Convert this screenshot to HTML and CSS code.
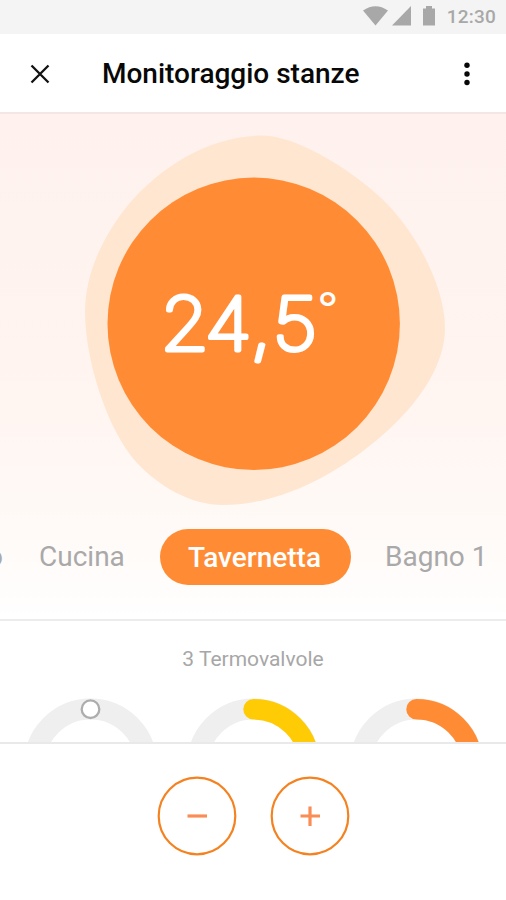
FILE: index.html
```html
<!DOCTYPE html>
<html lang="it">
<head>
<meta charset="utf-8">
<title>Monitoraggio stanze</title>
<link rel="stylesheet" href="styles.css">
</head>
<body>
<div class="screen">
  <div class="status">
    <svg class="status-icons" viewBox="0 0 76 22" width="76" height="22">
      <path d="M0 4.5Q12.500-4 25 4.500L12.500 19.500Z"/>
      <path d="M48 0V19.500H29Z"/>
      <path d="M60 2.500H63V0H69V2.500H72V19.500H60Z"/>
    </svg>
    <span class="clock">12:30</span>
  </div>
  <header class="header">
    <svg class="close" viewBox="0 0 20 20" width="20" height="20"><path d="M1.500 1.500L18.500 18.500M18.500 1.500L1.500 18.500"/></svg>
    <h1 class="title">Monitoraggio stanze</h1>
    <svg class="more" viewBox="0 0 6 24" width="6" height="24"><circle cx="3" cy="3.200" r="2.700"/><circle cx="3" cy="12" r="2.700"/><circle cx="3" cy="20.500" r="2.700"/></svg>
  </header>
  <main class="hero">
    <svg class="dial" viewBox="0 114 506 396" width="506" height="396">
      <path class="halo" d="M262 135.500C294 135.500 345 165 380 197C417 231 445 288 445 328C445 384 386 440 330 473C292 495 255 505 223 505C190 505 159 486 137 463C106 429 85 358 85 312C85 272 104 235 128 205C161 165 212 135.500 262 135.500Z"/>
      <circle class="disc" cx="253.700" cy="323.800" r="146.200"/>
      <text class="temp" y="350" transform="scale(1.08 1)"><tspan x="148.500">2</tspan><tspan x="189.500">4</tspan><tspan x="232">,</tspan><tspan x="252.500">5</tspan><tspan class="degree" x="294.500" y="323.500">°</tspan></text>
    </svg>
    <nav class="rooms">
      <span class="room room-left">Soggiorno</span>
      <span class="room room-kitchen">Cucina</span>
      <span class="room active">Tavernetta</span>
      <span class="room room-bath">Bagno 1</span>
    </nav>
  </main>
  <section class="valves">
    <h2 class="caption">3 Termovalvole</h2>
    <div class="gauges">
      <svg class="gauge" viewBox="0 0 134 45" width="134" height="45"><circle class="track" cx="66.500" cy="67" r="56"/><circle class="knob" cx="66.500" cy="11.200" r="8.800"/></svg>
      <svg class="gauge" viewBox="0 0 134 45" width="134" height="45"><circle class="track" cx="66.500" cy="67" r="56"/><path class="arc yellow" d="M66.500 11.200A55.800 55.800 0 0 1 122.300 67"/></svg>
      <svg class="gauge" viewBox="0 0 134 45" width="134" height="45"><circle class="track" cx="66.500" cy="67" r="56"/><path class="arc orange" d="M66.500 11.200A55.800 55.800 0 0 1 122.300 67"/></svg>
    </div>
  </section>
  <footer class="controls">
    <svg class="control" viewBox="0 0 80 80" width="80" height="80"><circle cx="40" cy="40" r="38.300"/><path d="M30.500 40H50"/></svg>
    <svg class="control" viewBox="0 0 80 80" width="80" height="80"><circle cx="40" cy="40" r="38.300"/><path d="M30.500 40H50M40 30.500V50"/></svg>
  </footer>
</div>
</body>
</html>
```
FILE: styles.css
```css
* { box-sizing: border-box; }
body { margin: 0; background: #fff; font-family: Roboto, "Liberation Sans", sans-serif; }
svg { display: block; flex: none; }
.screen { width: 506px; height: 900px; display: flex; flex-direction: column; overflow: hidden; }
.status { height: 34px; background: #f4f4f4; display: flex; justify-content: flex-end; padding: 6px 10px 0 0; }
.status-icons { fill: #a8a8a8; margin-right: 8px; }
.clock { font-size: 19px; line-height: 22px; font-weight: 500; letter-spacing: .2px; color: #a8a8a8; }
.header { height: 80px; display: flex; align-items: center; padding: 1px 36px 0 30px; border-bottom: 2px solid #f5e6e6; }
.close { fill: none; stroke: #111; stroke-width: 2.3; }
.title { margin: 0 auto 0 52px; font-size: 28px; line-height: 32px; font-weight: 500; color: #080808; white-space: nowrap; }
.more { fill: #080808; }
.hero { height: 507px; background: linear-gradient(#fff2ee 0%, #fff4f0 50%, #fff9f6 78%, #fffdfc 95%, #fff 100%); border-bottom: 2px solid #ececec; }
.halo { fill: #ffe6d1; }
.disc { fill: #ff8c34; }
.temp { font: 100 73px Inter, sans-serif; fill: #fff; stroke: #fff; stroke-width: 4.8; stroke-linejoin: round; }
.degree { font-size: 40px; stroke-width: 2.2; }
.rooms { display: flex; align-items: center; width: 506px; margin-top: 19px; height: 56px; overflow: hidden; font-size: 28px; line-height: 58px; color: #a9a9a9; white-space: nowrap; }
.room { flex: none; }
.room-left { width: 3px; display: flex; justify-content: flex-end; margin-right: 36px; }
.room-kitchen { width: 121px; }
.active { width: 191px; height: 56px; padding-right: 2px; border-radius: 28px; background: #ff8c34; color: #fff; text-align: center; font-weight: 500; }
.room-bath { margin-left: 34px; }
.valves { height: 121px; }
.caption { margin: 0; padding-top: 24px; font-size: 21px; line-height: 28px; font-weight: 400; text-align: center; color: #a7a7a7; }
.gauges { display: flex; gap: 29px; padding: 25px 0 0 24px; }
.track { fill: none; stroke: #efefef; stroke-width: 21; }
.knob { fill: #fff; stroke: #adadad; stroke-width: 2.3; }
.arc { fill: none; stroke-width: 20.5; stroke-linecap: round; }
.yellow { stroke: #ffcb05; }
.orange { stroke: #ff8c34; }
.controls { flex: 1; display: flex; justify-content: center; gap: 33px; padding-top: 32px; border-top: 2px solid #e9e9e9; }
.control { fill: none; stroke: #f58220; stroke-width: 2.2; }
.control path { stroke: #fa8d55; stroke-width: 3.2; }
```
